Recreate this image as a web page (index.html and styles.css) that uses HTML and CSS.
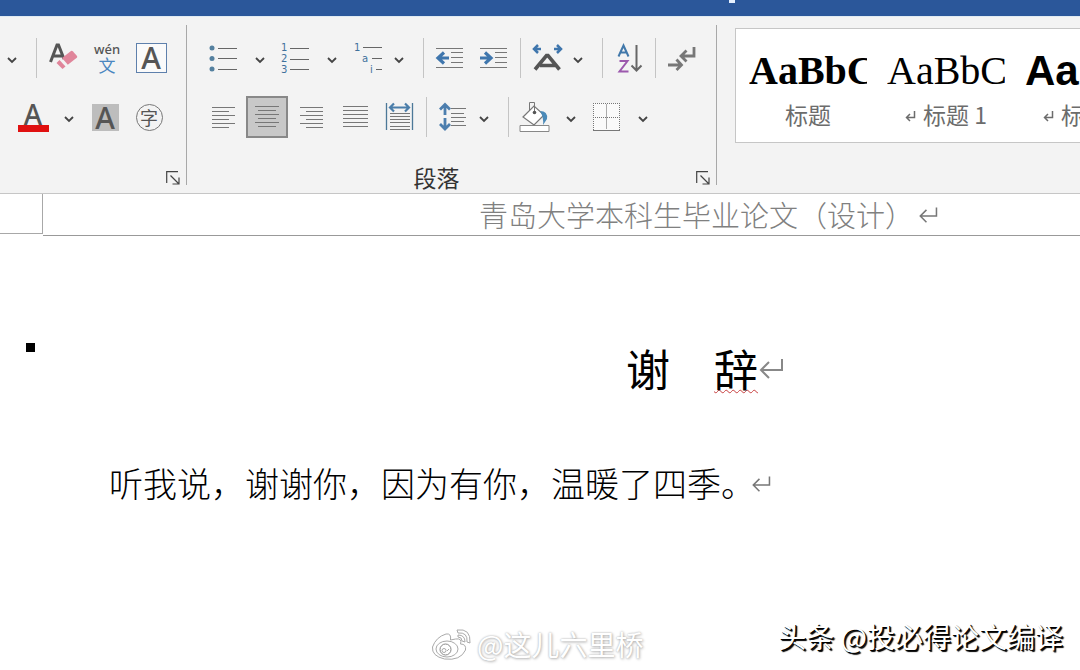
FILE: index.html
```html
<!DOCTYPE html>
<html lang="zh-CN">
<head>
<meta charset="utf-8">
<title>谢辞</title>
<link rel="stylesheet" href="styles.css">
</head>
<body>
<svg class="defs" aria-hidden="true">
  <symbol id="chev" viewBox="0 0 10 10"><path d="M1 3l4 4 4-4" fill="none" stroke="#444" stroke-width="1.8"/></symbol>
  <symbol id="ret" viewBox="0 0 26 22"><path d="M24 2v11H3M11 5l-8 8 8 8" fill="none" stroke="currentColor" stroke-width="2"/></symbol>
  <symbol id="ret-s" viewBox="0 0 11 11"><path d="M9.500 0v6.500H2M5 3L1.500 6.500 5 10" fill="none" stroke="currentColor" stroke-width="1.500"/></symbol>
  <symbol id="launch" viewBox="0 0 14 14"><path d="M.7 12V.7H12M4.500 4.500l8 8M13 6.500v6.500H6.500" fill="none" stroke="#444" stroke-width="1.2"/></symbol>
</svg>

<div class="titlebar"><span class="mark"></span></div>

<div class="ribbon">
  <section class="group font-group">
    <div class="row row-lead">
      <div class="split"><button class="drop" aria-label="更多"><svg width="10" height="10"><use href="#chev"/></svg></button></div>
      <span class="sep"></span>
      <button class="tool" aria-label="清除格式"><svg width="32" height="32" viewBox="0 0 32 32">
        <path d="M3.500 20L10 3h1.500L17 17M6 14h9" fill="none" stroke="#555" stroke-width="3"/>
        <path d="M15 16l9-7q1-.6 2 .4l4 4.600q.6 1-.2 1.700l-9 7z" fill="#e0859a"/><path d="M12.500 18l6 6.500-3 2.500-6-6z" fill="#e0859a"/></svg></button>
      <button class="tool pinyin" aria-label="拼音指南"><span>wén</span><b>文</b></button>
      <button class="tool" aria-label="字符边框"><span class="boxed">A</span></button>
    </div>
    <div class="row row-color">
      <div class="split"><button class="tool" aria-label="字体颜色"><span class="color-a">A</span></button>
      <button class="drop" aria-label="更多颜色"><svg width="10" height="10"><use href="#chev"/></svg></button></div>
      <button class="tool" aria-label="字符底纹"><span class="shaded">A</span></button>
      <button class="tool" aria-label="带圈字符"><span class="circled">字</span></button>
    </div>
    <div class="caption"><span></span><button class="launcher" aria-label="字体设置"><svg width="14" height="14"><use href="#launch"/></svg></button></div>
  </section>

  <section class="group para-group">
    <div class="row">
      <div class="split"><button class="tool" aria-label="项目符号"><svg width="32" height="32" viewBox="0 0 32 32"><g fill="#54809f"><circle cx="4" cy="6" r="2.500"/><circle cx="4" cy="16.500" r="2.500"/><circle cx="4" cy="27" r="2.500"/></g><path d="M10 6.500h19M10 16.500h19M10 27.500h19" stroke="#666"/></svg></button>
      <button class="drop" aria-label="项目符号库"><svg width="10" height="10"><use href="#chev"/></svg></button></div>
      <div class="split"><button class="tool" aria-label="编号"><svg width="32" height="32" viewBox="0 0 32 32"><g class="num"><text x="1" y="9">1</text><text x="1" y="20">2</text><text x="1" y="31">3</text></g><path d="M10 6.500h19M10 17.500h19M10 27.500h19" stroke="#666"/></svg></button>
      <button class="drop" aria-label="编号库"><svg width="10" height="10"><use href="#chev"/></svg></button></div>
      <div class="split tight"><button class="tool" aria-label="多级列表"><svg width="32" height="32" viewBox="0 0 32 32"><g class="num"><text x="2" y="9">1</text><text x="10" y="20">a</text><text x="18" y="31">i</text></g><path d="M11 5.500h19M20 16.500h10M24 27.500h6" stroke="#666"/></svg></button>
      <button class="drop" aria-label="列表库"><svg width="10" height="10"><use href="#chev"/></svg></button></div>
      <span class="sep"></span>
      <button class="tool" aria-label="减少缩进"><svg width="32" height="32" viewBox="0 0 32 32"><path d="M2 6.500h27M17 10.500h12M17 15.500h12M17 20.500h12M2 25.500h27" stroke="#777"/><path d="M15 16H4M10 10.500L4 16l6 5.500" fill="none" stroke="#3f76ad" stroke-width="3.200"/></svg></button>
      <button class="tool" aria-label="增加缩进"><svg width="32" height="32" viewBox="0 0 32 32"><path d="M2 6.500h27M17 10.500h12M17 15.500h12M17 20.500h12M2 25.500h27" stroke="#777"/><path d="M2 16h11M7 10.500l6 5.500-6 5.500" fill="none" stroke="#3f76ad" stroke-width="3.200"/></svg></button>
      <span class="sep"></span>
      <div class="split tight"><button class="tool" aria-label="中文版式"><svg width="32" height="32" viewBox="0 0 32 32"><path d="M10 7H3M7 3L3 7l4 4M23 7h7M26 3l4 4-4 4" fill="none" stroke="#3f76ad" stroke-width="2.500"/><path d="M4 27.500L15.500 13.500h1.500L28.500 27.500M9 23.500h15" fill="none" stroke="#555" stroke-width="3.600"/></svg></button>
      <button class="drop" aria-label="更多版式"><svg width="10" height="10"><use href="#chev"/></svg></button></div>
      <span class="sep"></span>
      <button class="tool" aria-label="排序"><svg width="32" height="32" viewBox="0 0 32 32"><path d="M5.500 14.500l5-11 5 11M7.500 10.500h6" fill="none" stroke="#4178aa" stroke-width="2"/><path d="M6.500 19h8l-8 10.500h9" fill="none" stroke="#9c59ad" stroke-width="2"/><path d="M23.500 3v25M18.500 23.500l5 5 5-5" fill="none" stroke="#666" stroke-width="2"/></svg></button>
      <span class="sep"></span>
      <button class="tool" aria-label="显示编辑标记"><svg width="32" height="32" viewBox="0 0 32 32"><path d="M28 5v9H15M20.500 8.500L15 14l5.500 5.500M2 23h13M10.500 17.500L15.500 23l-5 5" fill="none" stroke="#777" stroke-width="2.800"/></svg></button>
    </div>
    <div class="row row-align">
      <button class="tool" aria-label="左对齐"><svg width="32" height="32" viewBox="0 0 32 32"><path d="M6 6.500h23M6 10.500h17M6 14.500h23M6 18.500h17M6 22.500h23M6 26.500h17" stroke="#777"/></svg></button>
      <button class="tool active" aria-label="居中" aria-pressed="true"><svg width="32" height="32" viewBox="0 0 32 32"><path d="M4 5.500h24M7 9.500h18M4 13.500h24M7 17.500h18M4 21.500h24M7 25.500h18" stroke="#777"/></svg></button>
      <button class="tool" aria-label="右对齐"><svg width="32" height="32" viewBox="0 0 32 32"><path d="M4 6.500h23M10 10.500h17M4 14.500h23M10 18.500h17M4 22.500h23M10 26.500h17" stroke="#777"/></svg></button>
      <button class="tool" aria-label="两端对齐"><svg width="32" height="32" viewBox="0 0 32 32"><path d="M3 5.500h25M3 9.500h25M3 13.500h25M3 17.500h25M3 21.500h25M3 25.500h25" stroke="#777"/></svg></button>
      <button class="tool" aria-label="分散对齐"><svg width="32" height="32" viewBox="0 0 32 32"><path d="M2.500 2v27M28.500 2v27" stroke="#4c7898" stroke-width="1.300"/><path d="M6 12.500h20M6 15.500h20M6 18.500h20M6 21.500h20M6 25.500h20M6 28.500h20" stroke="#777"/><path d="M6 6.500h19M10 2.500l-4 4 4 4M21 2.500l4 4-4 4" fill="none" stroke="#4b7eaa" stroke-width="2.200"/></svg></button>
      <span class="sep"></span>
      <div class="split tight"><button class="tool" aria-label="行距"><svg width="32" height="32" viewBox="0 0 32 32"><path d="M14 7.500h15M14 12.500h13M14 16.500h15M14 20.500h13M14 24.500h15" stroke="#777"/><path d="M8 14V4M3 8.500L8 3.500l5 5M8 17v10M3 23l5 5 5-5" fill="none" stroke="#4c7eae" stroke-width="2.800"/></svg></button>
      <button class="drop" aria-label="行距选项"><svg width="10" height="10"><use href="#chev"/></svg></button></div>
      <span class="sep"></span>
      <div class="split"><button class="tool" aria-label="底纹"><svg width="32" height="32" viewBox="0 0 32 32"><path d="M1 24.500h29v6H1z" fill="#fff" stroke="#888"/><path d="M4 16L15 5l10 9-10 10z" fill="#fff" stroke="#777" stroke-width="1.200"/><path d="M10.500 10V1.500h5V12" fill="none" stroke="#777"/><circle cx="15.500" cy="11.500" r="1.800" fill="#555"/><path d="M21 10q8 0 7 8l-4 6q1-7-3-14z" fill="#4b8ab8"/></svg></button>
      <button class="drop" aria-label="底纹颜色"><svg width="10" height="10"><use href="#chev"/></svg></button></div>
      <div class="split"><button class="tool" aria-label="边框"><svg width="32" height="32" viewBox="0 0 32 32"><path d="M2 2h27v27H2z" fill="#fafafa"/><path d="M2 2.500h27M2.500 2v27M28.500 2v27M2 16.500h27" stroke="#777" stroke-dasharray="1 1"/><path d="M15.500 3v25" stroke="#aaa"/><path d="M2 29.500h27" stroke="#777"/></svg></button>
      <button class="drop" aria-label="边框选项"><svg width="10" height="10"><use href="#chev"/></svg></button></div>
    </div>
    <div class="caption"><span>段落</span><button class="launcher" aria-label="段落设置"><svg width="14" height="14"><use href="#launch"/></svg></button></div>
  </section>

  <section class="gallery">
    <button class="style"><span class="sample bold">AaBbC</span><span class="name">标题</span></button>
    <button class="style"><span class="sample">AaBbC</span><span class="name"><svg width="11" height="11"><use href="#ret-s"/></svg>标题 1</span></button>
    <button class="style"><span class="sample sans">AaBbC</span><span class="name"><svg width="11" height="11"><use href="#ret-s"/></svg>标题 2</span></button>
  </section>
</div>

<main class="page">
  <header class="page-head">
    <div class="corner"></div>
    <p class="running">青岛大学本科生毕业论文（设计）<svg class="mark-s" width="20" height="17"><use href="#ret"/></svg></p>
  </header>
  <div class="heading">
    <span class="bullet"></span>
    <h1>谢　<span class="typo">辞</span><svg width="26" height="22"><use href="#ret"/></svg></h1>
  </div>
  <p class="text">听我说，谢谢你，因为有你，温暖了四季。<svg class="mark-s" width="20" height="17"><use href="#ret"/></svg></p>
  <footer class="credits">
    <div class="weibo">
      <svg width="42" height="36" viewBox="0 0 42 36" fill="none" stroke="#aaa"><path d="M15 8Q5 11 1.500 21q-1 9 12 12 16 2 21-9 1-6-5-6 2-6-5-5l-5 1q1-7-4.500-6z" fill="#fff"/><ellipse cx="16" cy="23" rx="11" ry="8"/><circle cx="14.500" cy="23.500" r="5.500" stroke="#888"/><circle cx="13" cy="24.500" r="2"/><path d="M16 25l2-2M26 4q14-2 13 13l-3-1Q37 6 27 7zM27 9q7 0 7 7l-3-1q0-4-4-4z"/></svg>
      <span>@这儿六里桥</span>
    </div>
    <div class="toutiao">头条 @投必得论文编译</div>
  </footer>
</main>
</body>
</html>
```
FILE: styles.css
```css
* { box-sizing: border-box; }

body {
  margin: 0;
  min-height: 100vh;
  display: flex;
  flex-direction: column;
  overflow-x: hidden;
  background: #fff;
  font-family: "Noto Sans CJK SC", sans-serif;
}

p, h1 { margin: 0; }

svg { display: block; flex: none; overflow: visible; }

.defs { position: absolute; width: 0; height: 0; }

button {
  border: 0;
  padding: 0;
  background: none;
  color: #555;
  font-family: inherit;
}

.titlebar {
  height: 16px;
  padding-left: 729px;
  background: #2b579a;
}

.mark {
  display: block;
  width: 6px;
  height: 3px;
  background: #e6f1ff;
}

/* Ribbon */
.ribbon {
  display: flex;
  padding: 8px 0;
  background: #f3f3f3;
  border-top: 1px solid #dfeaf2;
  border-bottom: 1px solid #c6c6c6;
}

.group {
  flex: none;
  display: flex;
  flex-direction: column;
  padding-top: 12px;
  border-right: 1px solid #a8a8a8;
}

.font-group { width: 187px; }
.para-group { width: 530px; }

.row {
  display: flex;
  align-items: center;
  gap: 12px;
  height: 42px;
  padding-left: 21px;
}

.row + .row { margin-top: 17px; }
.row-align { padding-left: 19px; }
.row-lead { padding-left: 4px; }
.row-color { padding-left: 17px; }

.split { display: flex; align-items: center; gap: 12px; }
.tight { gap: 7px; }

.tool {
  display: flex;
  flex: none;
  align-items: center;
  justify-content: center;
  width: 32px;
  height: 42px;
}

.active {
  width: 42px;
  margin: 0 -4px;
  background: #c8c8c8;
  border: 2px solid #888;
}

.drop {
  display: flex;
  align-items: center;
  justify-content: center;
  width: 16px;
  height: 42px;
  padding-top: 3px;
}

.sep {
  width: 1px;
  height: 40px;
  margin: 0 -2px;
  background: #c4c4c4;
}

.split + .sep { margin-left: 4px; }

.num {
  fill: #3f719c;
  font: 10px "DejaVu Sans", sans-serif;
}

.pinyin {
  flex-direction: column;
  font-size: 14px;
  line-height: 14px;
}

.pinyin span {
  font-family: "Noto Sans", sans-serif;
  font-size: 13px;
  font-weight: 500;
}

.pinyin b {
  color: #4a86c0;
  font-size: 17px;
  font-weight: 400;
  line-height: 18px;
}

.boxed, .shaded, .color-a {
  display: block;
  font-family: "Noto Sans", sans-serif;
  font-weight: 500;
  text-align: center;
}

.boxed {
  width: 31px;
  border: 1px solid #5e80ac;
  background: #fafafa;
  font-size: 30px;
  line-height: 28px;
}

.shaded {
  width: 27px;
  background: #bdbdbd;
  font-size: 30px;
  line-height: 27px;
}

.color-a {
  width: 31px;
  border-bottom: 7px solid #e01010;
  font-size: 28px;
  line-height: 22px;
}

.circled {
  width: 27px;
  border: 1px solid #777;
  border-radius: 50%;
  font-size: 18px;
  line-height: 25px;
}

.caption {
  display: flex;
  align-items: center;
  margin-top: 30px;
  padding-right: 6px;
  color: #333;
  font-size: 23px;
  line-height: 16px;
}

.launcher { padding-top: 3px; }

.caption span { flex: 1; text-align: center; }
.para-group .caption span { padding-right: 10px; }

/* Style gallery */
.gallery {
  flex: 1;
  min-width: 0;
  display: flex;
  gap: 20px;
  height: 115px;
  margin: 3px 0 0 18px;
  padding-left: 13px;
  overflow: hidden;
  background: #fff;
  border: 1px solid #c6c6c6;
  border-right: 0;
}

.style {
  flex: none;
  display: flex;
  flex-direction: column;
  width: 118px;
  padding-top: 18px;
  overflow: hidden;
}

.sample {
  width: 100%;
  overflow: hidden;
  color: #000;
  font: 40px/48px "Liberation Serif", serif;
  text-align: left;
}

.bold { font-weight: 700; }
.sans { font-family: "Liberation Sans", sans-serif; font-size: 42px; font-weight: 700; }

.name {
  display: flex;
  align-items: center;
  justify-content: center;
  gap: 7px;
  width: 100%;
  color: #6c6c6c;
  font-size: 23px;
  line-height: 38px;
  white-space: pre;
}

.name svg { margin-top: 5px; }

/* Document */
.page {
  flex: 1;
  display: flex;
  flex-direction: column;
}

.page-head { display: flex; }

.corner {
  width: 43px;
  height: 40px;
  border: solid #a8a8a8;
  border-width: 0 1px 1px 0;
}

.running {
  flex: 1;
  display: flex;
  align-items: center;
  gap: 6px;
  padding-left: 436px;
  border-bottom: 1px solid #999;
  color: #808080;
  font-size: 29px;
  font-weight: 300;
  line-height: 41px;
  white-space: nowrap;
}

.running .mark-s { margin-left: -2px; }

.mark-s { color: #777; }

.heading {
  display: flex;
  align-items: flex-start;
  margin-top: 107px;
}

.bullet {
  width: 9px;
  height: 9px;
  margin-left: 26px;
  background: #000;
}

h1 {
  display: flex;
  align-items: center;
  margin-left: 591px;
  color: #000;
  font-size: 44px;
  font-weight: 400;
  line-height: 50px;
}

h1 svg { color: #888; }

.typo {
  text-decoration: underline wavy #c84040 1px;
  text-underline-offset: 2px;
}

.text {
  display: flex;
  align-items: center;
  margin-top: 66px;
  padding-left: 109px;
  color: #000;
  font-size: 34px;
  font-weight: 300;
  line-height: 48px;
  white-space: nowrap;
}

.text .mark-s { margin-left: -4px; }

.credits {
  display: flex;
  justify-content: space-between;
  margin-top: auto;
  padding: 0 17px 8px 431px;
  white-space: nowrap;
}

.weibo {
  display: flex;
  align-items: center;
  gap: 4px;
  color: #fff;
  font-size: 28px;
  line-height: 36px;
  text-shadow: 0 0 2px #aaa, 1px 1px 3px #bbb;
}

.toutiao {
  color: #fff;
  font-size: 28px;
  line-height: 20px;
  text-shadow: 1px 1px 0 #000, 2px 2px 1px #000;
}
```
